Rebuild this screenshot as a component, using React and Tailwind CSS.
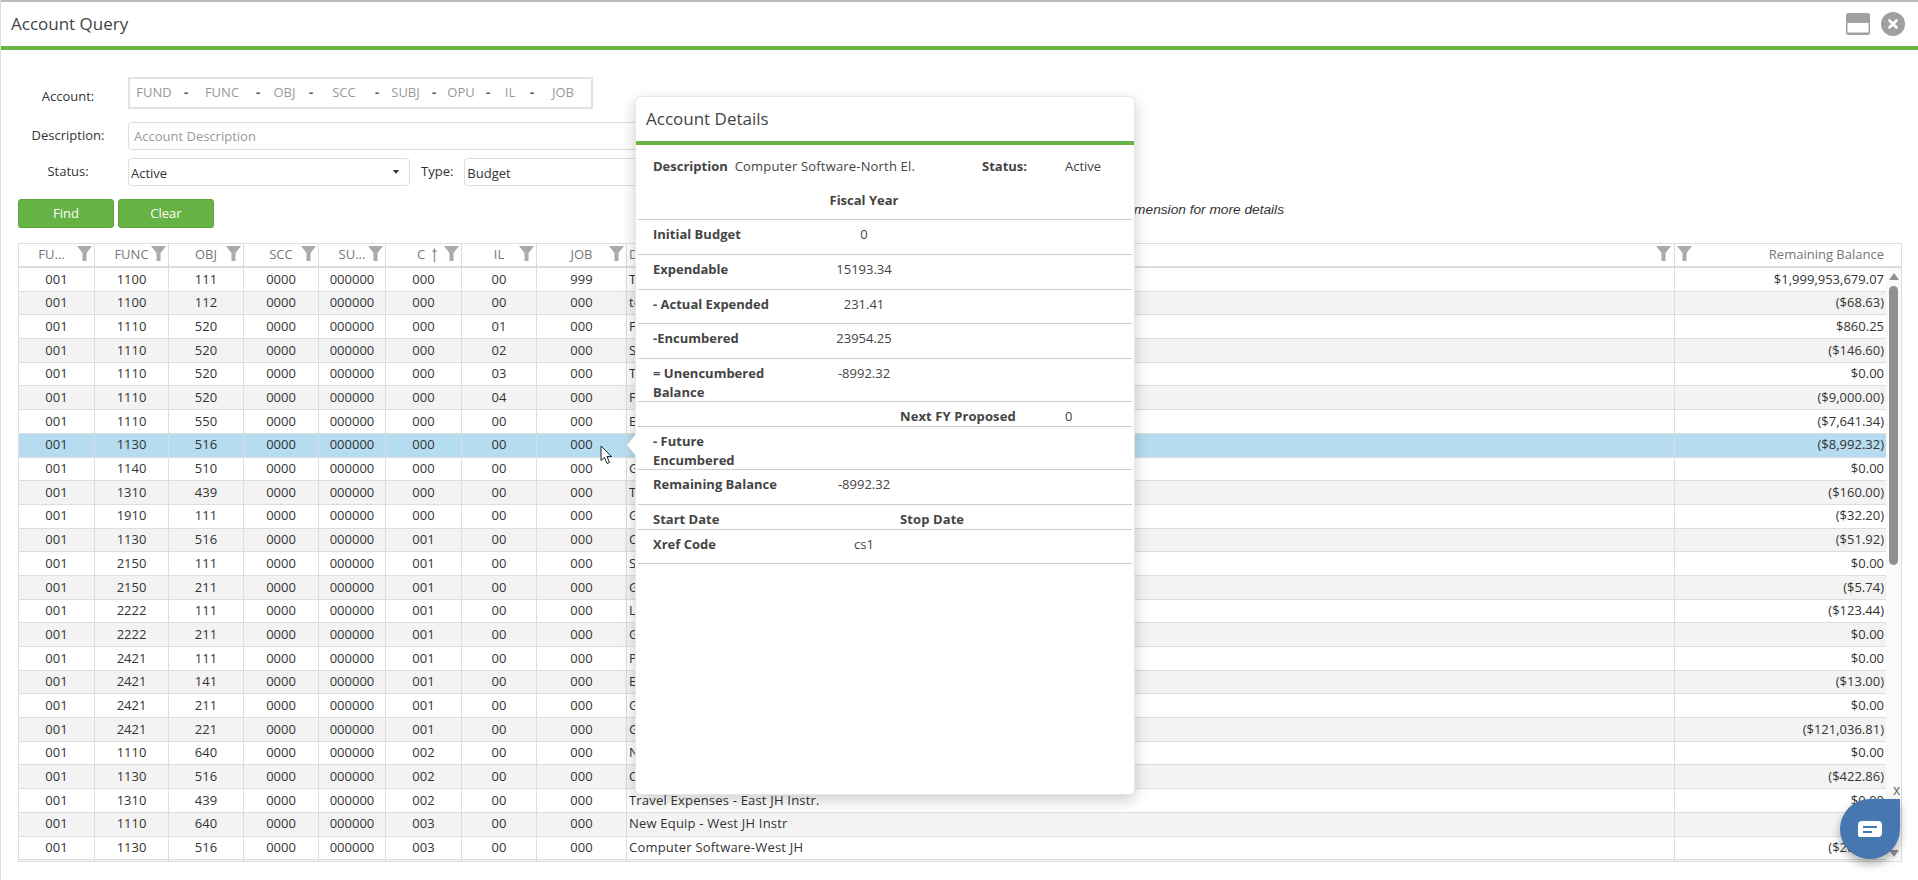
import React from 'react';

const rows = [
  ['001', '1100', '111', '0000', '000000', '000', '00', '999', 'Transfers Out', '$1,999,953,679.07'],
  ['001', '1100', '112', '0000', '000000', '000', '00', '000', 'test', '($68.63)'],
  ['001', '1110', '520', '0000', '000000', '000', '01', '000', 'Furniture - East El.', '$860.25'],
  ['001', '1110', '520', '0000', '000000', '000', '02', '000', 'Supplies - West El.', '($146.60)'],
  ['001', '1110', '520', '0000', '000000', '000', '03', '000', 'Textbooks', '$0.00'],
  ['001', '1110', '520', '0000', '000000', '000', '04', '000', 'Furniture - North El.', '($9,000.00)'],
  ['001', '1110', '550', '0000', '000000', '000', '00', '000', 'Equipment', '($7,641.34)'],
  ['001', '1130', '516', '0000', '000000', '000', '00', '000', 'Computer Software-North El.', '($8,992.32)'],
  ['001', '1140', '510', '0000', '000000', '000', '00', '000', 'General Supplies', '$0.00'],
  ['001', '1310', '439', '0000', '000000', '000', '00', '000', 'Travel Expenses', '($160.00)'],
  ['001', '1910', '111', '0000', '000000', '000', '00', '000', 'General Salaries', '($32.20)'],
  ['001', '1130', '516', '0000', '000000', '001', '00', '000', 'Computer Software', '($51.92)'],
  ['001', '2150', '111', '0000', '000000', '001', '00', '000', 'Salaries', '$0.00'],
  ['001', '2150', '211', '0000', '000000', '001', '00', '000', 'Group Insurance', '($5.74)'],
  ['001', '2222', '111', '0000', '000000', '001', '00', '000', 'Library Salaries', '($123.44)'],
  ['001', '2222', '211', '0000', '000000', '001', '00', '000', 'Group Insurance', '$0.00'],
  ['001', '2421', '111', '0000', '000000', '001', '00', '000', 'Principal Salaries', '$0.00'],
  ['001', '2421', '141', '0000', '000000', '001', '00', '000', 'Extra Duty', '($13.00)'],
  ['001', '2421', '211', '0000', '000000', '001', '00', '000', 'Group Insurance', '$0.00'],
  ['001', '2421', '221', '0000', '000000', '001', '00', '000', 'Group Retirement', '($121,036.81)'],
  ['001', '1110', '640', '0000', '000000', '002', '00', '000', 'New Equip - East JH', '$0.00'],
  ['001', '1130', '516', '0000', '000000', '002', '00', '000', 'Computer Software-East JH', '($422.86)'],
  ['001', '1310', '439', '0000', '000000', '002', '00', '000', 'Travel Expenses - East JH Instr.', '$0.00'],
  ['001', '1110', '640', '0000', '000000', '003', '00', '000', 'New Equip - West JH Instr', '$0.00'],
  ['001', '1130', '516', '0000', '000000', '003', '00', '000', 'Computer Software-West JH', '($200.00)'],
  ['', '', '', '', '', '', '', '', '', ''],
];

const colWidths = ['w-[76px]', 'w-[74px]', 'w-[75px]', 'w-[75px]', 'w-[67px]', 'w-[76px]', 'w-[75px]', 'w-[90px]'];

const acctParts = [
  ['FUND', 'w-[48px]'],
  ['FUNC', 'w-[56px]'],
  ['OBJ', 'w-[37px]'],
  ['SCC', 'w-[50px]'],
  ['SUBJ', 'w-[41px]'],
  ['OPU', 'w-[38px]'],
  ['IL', 'w-[28px]'],
  ['JOB', 'w-[46px]'],
];

function Funnel({ className }) {
  return (
    <svg className={className} width="15" height="15" viewBox="0 0 15 15">
      <path d="M0 0H15L9.5 7V15H5.5V7Z" fill="#aaaaaa" />
    </svg>
  );
}

function HeaderCell({ width, label, pad = '' }) {
  return (
    <div className={`${width} relative h-full border-r border-[#dddddd] flex items-center justify-center ${pad}`}>
      <span>{label}</span>
      <Funnel className="absolute right-[2px] top-[2px]" />
    </div>
  );
}

function DetailRow({ height, label, value, label2, value2 }) {
  return (
    <div className={`grid grid-cols-[205px_42px_165px_1fr] border-b border-[#cccccc] pt-[5px] leading-[19px] ${height}`}>
      <div className="pl-[15px] font-bold text-[#444444]">
        <div className="max-w-[128px]">{label}</div>
      </div>
      <div className="flex justify-center whitespace-nowrap">{value}</div>
      <div className="pl-[15px] font-bold text-[#444444] whitespace-nowrap tracking-[0.1px]">{label2}</div>
      <div className="pl-[15px]">{value2}</div>
    </div>
  );
}

export default function App() {
  return (
    <div className="relative w-[1918px] h-[880px] overflow-hidden bg-white border-l border-[#dddddd] font-['Open_Sans',sans-serif] text-[13px] text-[#333333]">
      {/* title bar */}
      <div className="h-[50px] border-t-2 border-t-[#bbbbbb] border-b-4 border-b-[#6ab446] flex items-center justify-between pl-[10px] pr-[13px]">
        <div className="text-[17px] text-[#444444]">Account Query</div>
        <div className="flex items-center gap-[11px]">
          <svg width="24" height="22" viewBox="0 0 24 22">
            <rect x="0" y="0" width="24" height="22" rx="2.5" fill="#a0a0a0" />
            <rect x="1.5" y="10" width="21" height="9.5" fill="#ffffff" />
          </svg>
          <svg width="24" height="24" viewBox="0 0 24 24">
            <circle cx="12" cy="12" r="12" fill="#a0a0a0" />
            <path d="M8.5 8.5L15.5 15.5M15.5 8.5L8.5 15.5" stroke="#ffffff" strokeWidth="2.6" strokeLinecap="round" />
          </svg>
        </div>
      </div>

      {/* query form */}
      <div className="pl-[12px]">
        <div className="flex mt-[27px]">
          <label className="w-[110px] mr-[5px] text-center pt-[6px] leading-[26px]">Account:</label>
          <div className="w-[465px] h-[32px] border-2 border-[#e1e1e8] flex items-center pb-[1px]">
            {acctParts.map(([name, w], i) => (
              <React.Fragment key={name}>
                <span className={`${w} text-center text-[#999999]`}>{name}</span>
                {i < acctParts.length - 1 && <span className="w-[16px] text-center font-bold text-[#555555]">-</span>}
              </React.Fragment>
            ))}
          </div>
        </div>
        <div className="flex items-center mt-[13px]">
          <label className="w-[110px] mr-[5px] text-center">Description:</label>
          <div className="w-[620px] h-[28px] border border-[#dddddd] rounded-[4px] pl-[5px] pt-[2px] flex items-center text-[#999999]">Account Description</div>
        </div>
        <div className="flex items-center mt-[8px]">
          <label className="w-[110px] mr-[5px] text-center">Status:</label>
          <div className="w-[282px] h-[28px] border border-[#dddddd] rounded-[4px] pl-[2px] pr-[10px] flex items-center justify-between">
            <span className="pt-[3px]">Active</span>
            <span className="w-0 h-0 border-x-[3px] border-x-transparent border-t-[4px] border-t-[#333333]"></span>
          </div>
          <label className="ml-[11px] mr-[11px]">Type:</label>
          <div className="w-[282px] h-[28px] border border-[#dddddd] rounded-[4px] pl-[2px] flex items-center">
            <span className="pt-[3px]">Budget</span>
          </div>
        </div>
      </div>
      <div className="flex justify-between w-[1266px] ml-[17px] mt-[13px]">
        <div className="flex gap-[4px]">
          <button className="w-[96px] h-[29px] rounded-[3px] bg-[#66b245] border border-[#5da23e] text-white">Find</button>
          <button className="w-[96px] h-[29px] rounded-[3px] bg-[#66b245] border border-[#5da23e] text-white">Clear</button>
        </div>
        <div className="font-['Liberation_Sans',sans-serif] italic text-[13.7px] leading-[18px] pt-[2px] text-[#333333]">Hover over an account dimension for more details</div>
      </div>

      {/* account grid */}
      <div className="ml-[17px] mt-[15px] w-[1884px] border border-[#dddddd]">
        <div className="flex h-[24px] border-b-2 border-[#dddddd] text-[#777777]">
          <HeaderCell width="w-[76px]" label="FU..." pad="pr-[10px]" />
          <HeaderCell width="w-[74px]" label="FUNC" />
          <HeaderCell width="w-[75px]" label="OBJ" />
          <HeaderCell width="w-[75px]" label="SCC" />
          <HeaderCell width="w-[67px]" label="SU..." />
          <div className="w-[76px] relative h-full border-r border-[#dddddd] flex items-center justify-center pl-[7px]">
            <span>C</span>
            <svg className="ml-[7px]" width="5" height="14" viewBox="0 0 5 14">
              <path d="M2.5 0L5 4H3.2V14H1.8V4H0Z" fill="#999999" />
            </svg>
            <Funnel className="absolute right-[2px] top-[2px]" />
          </div>
          <HeaderCell width="w-[75px]" label="IL" />
          <HeaderCell width="w-[90px]" label="JOB" />
          <div className="w-[1048px] relative h-full border-r border-[#dddddd] flex items-center pl-[2px]">
            <span>D</span>
            <Funnel className="absolute right-[3px] top-[2px]" />
          </div>
          <div className="flex-1 relative h-full flex items-center justify-end pr-[17px]">
            <Funnel className="absolute left-[2px] top-[2px]" />
            <span>Remaining Balance</span>
          </div>
        </div>
        <div className="flex h-[593px] overflow-hidden">
          <div className="w-[1867px]">
            {rows.map((r, i) => (
              <div
                key={i}
                className={`flex h-[23.7px] border-b border-[#dddddd] ${i === 7 ? 'bg-[#b5dcef]' : i % 2 === 1 ? 'bg-[#f3f3f3]' : 'bg-white'}`}
              >
                {colWidths.map((w, c) => (
                  <div key={c} className={`${w} border-r border-[#dddddd] flex items-center justify-center`}>{r[c]}</div>
                ))}
                <div className="w-[1048px] border-r border-[#dddddd] flex items-center pl-[2px] tracking-[0.2px]">{r[8]}</div>
                <div className="w-[211px] flex items-center justify-end pr-[2px]">{r[9]}</div>
              </div>
            ))}
          </div>
          {/* scrollbar */}
          <div className="flex-1 bg-[#fafafa] flex flex-col items-center pt-[5px]">
            <span className="w-0 h-0 border-x-[5px] border-x-transparent border-b-[7px] border-b-[#909090]"></span>
            <div className="w-[9px] h-[279px] mt-[6px] rounded-[5px] bg-[#909090]"></div>
            <span className="w-0 h-0 mt-[285px] border-x-[5px] border-x-transparent border-t-[7px] border-t-[#909090]"></span>
          </div>
        </div>
      </div>

      {/* mouse pointer */}
      <svg className="absolute left-[599px] top-[445px]" width="14" height="20" viewBox="0 0 14 20">
        <path d="M1 1V15.5L4.5 12.5L7 18.5L9.5 17.5L7 11.5H11.5Z" fill="#ffffff" stroke="#222222" strokeWidth="1" />
      </svg>

      {/* popover */}
      <svg className="absolute left-[626px] top-[433px] z-10" width="10" height="24" viewBox="0 0 10 24">
        <path d="M10 0V24L0 12Z" fill="#ffffff" />
      </svg>
      <div className="absolute left-[634px] top-[96px] w-[500px] h-[699px] bg-white border border-[#00000018] rounded-[6px] shadow-[0_5px_15px_rgba(0,0,0,0.2)] text-[#444444]">
        <div className="h-[44px] border-b-4 border-[#6ab446] box-content pl-[10px] flex items-center text-[17px]">Account Details</div>
        <div className="px-[2px]">
          <div className="grid grid-cols-[344px_83px_1fr] h-[41px] pt-[12px] leading-[19px]">
            <div className="pl-[15px] flex gap-[7px]">
              <span className="font-bold">Description</span>
              <span className="tracking-[0.18px]">Computer Software-North El.</span>
            </div>
            <div className="font-bold">Status:</div>
            <div>Active</div>
          </div>
          <DetailRow height="h-[34px]" value={<span className="font-bold">Fiscal Year</span>} />
          <DetailRow height="h-[35px]" label="Initial Budget" value="0" />
          <DetailRow height="h-[35px]" label="Expendable" value="15193.34" />
          <DetailRow height="h-[34px]" label="- Actual Expended" value="231.41" />
          <DetailRow height="h-[35px]" label="-Encumbered" value="23954.25" />
          <DetailRow height="h-[43px]" label="= Unencumbered Balance" value="-8992.32" />
          <DetailRow height="h-[25px]" label2="Next FY Proposed" value2="0" />
          <DetailRow height="h-[43px]" label="- Future Encumbered" />
          <DetailRow height="h-[35px]" label="Remaining Balance" value="-8992.32" />
          <DetailRow height="h-[25px]" label="Start Date" label2="Stop Date" />
          <DetailRow height="h-[34px]" label="Xref Code" value="cs1" />
        </div>
      </div>

      {/* chat widget */}
      <div className="absolute left-[1892px] top-[780px] text-[14px] leading-[20px] text-[#666666]">x</div>
      <div className="absolute left-[1839px] top-[799px] w-[60px] h-[60px] rounded-full rounded-tr-[10px] bg-[#4677b0] shadow-[0_5px_10px_rgba(0,0,0,0.3)] flex items-center justify-center">
        <svg width="24" height="17" viewBox="0 0 24 17">
          <path d="M4 0H20A4 4 0 0 1 24 4V12A4 4 0 0 1 20 16H2.5C1 16 0 15.5 0 14V4A4 4 0 0 1 4 0Z" fill="#ffffff" />
          <path d="M5 6H19M5 11H14" stroke="#4677b0" strokeWidth="2" />
        </svg>
      </div>
    </div>
  );
}
